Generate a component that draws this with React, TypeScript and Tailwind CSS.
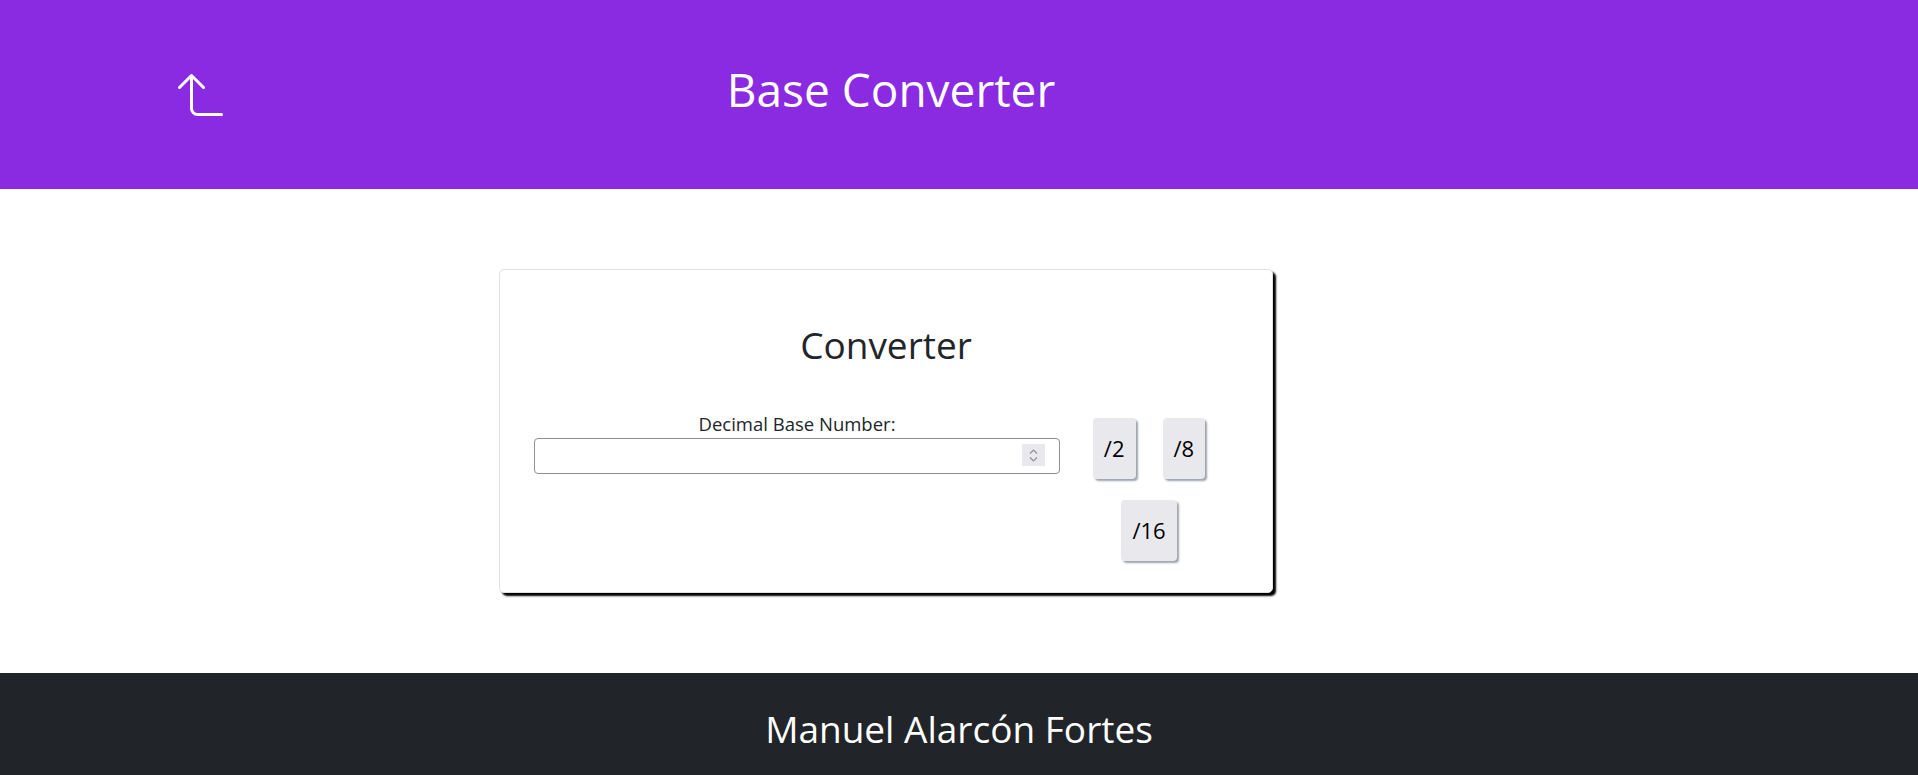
import { BsArrow90DegUp } from "react-icons/bs";

const font = { fontFamily: '"Open Sans", "Noto Sans", sans-serif' };

function Spinner() {
  return (
    <div className="pointer-events-none absolute right-[15px] top-[6px] flex h-[22px] w-[23px] flex-col items-center justify-center gap-[3px] bg-[#e9e9ed]">
      <svg width="9" height="5" viewBox="0 0 9 5" fill="none">
        <path d="M1 4.5 4.5 1 8 4.5" stroke="#8f8f9d" strokeWidth="1.2" />
      </svg>
      <svg width="9" height="5" viewBox="0 0 9 5" fill="none">
        <path d="M1 0.5 4.5 4 8 0.5" stroke="#8f8f9d" strokeWidth="1.2" />
      </svg>
    </div>
  );
}

function DivButton({ label }: { label: string }) {
  return (
    <button className="flex h-[61px] items-center justify-center rounded-[4px] bg-[#e9e9ed] px-[11px] text-[22px] text-black shadow-[2px_2px_2px_#9ca3af]">
      {label}
    </button>
  );
}

export default function App() {
  return (
    <div className="flex min-h-screen flex-col bg-white text-[#212529]" style={font}>
      <header className="flex h-[189px] items-center bg-[#8a2be2] pl-[178px] text-white">
        <BsArrow90DegUp size={48} />
        <div className="w-[1330px] text-center">
          <h1 className="mb-[12px] text-[46px] font-normal leading-[56px]">Base Converter</h1>
        </div>
      </header>

      <main className="py-[80px]">
        <div className="ml-[499px] w-[774px] rounded-[5px] border border-[#dee2e6] bg-white px-[34px] pb-[31px] pt-[53px] shadow-[3px_3px_2px_#000]">
          <h2 className="text-center text-[37px] leading-[44px]">Converter</h2>

          <div className="mt-[45px] flex items-start">
            <div className="flex w-[526px] flex-col items-center">
              <label className="mb-[2px] text-[18.5px] leading-[24px]">Decimal Base Number:</label>
              <div className="relative w-full">
                <input
                  type="text"
                  className="h-[36px] w-full rounded-[4px] border border-[#8f8f9d] bg-white px-2 outline-none"
                />
                <Spinner />
              </div>
            </div>

            <div className="mt-[6px] flex flex-1 flex-wrap justify-center gap-x-[27px] gap-y-[21px]">
              <DivButton label="/2" />
              <DivButton label="/8" />
              <DivButton label="/16" />
            </div>
          </div>
        </div>
      </main>

      <footer className="bg-[#212529] pb-[30px] pt-[30px] text-center text-white">
        <p className="text-[37px] font-normal leading-[52px]">Manuel Alarcón Fortes</p>
      </footer>
    </div>
  );
}
